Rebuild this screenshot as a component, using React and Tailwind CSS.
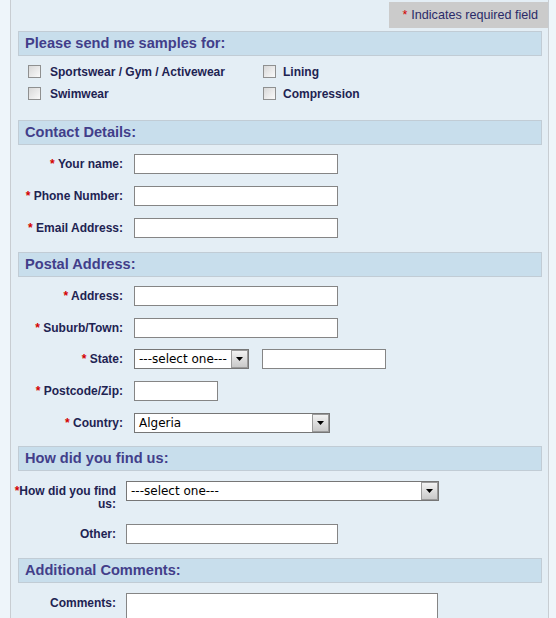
const Star = () => <span className="text-[#d40000]">*</span>;

const SectionHeader = ({ children }) => (
  <div className="h-[25px] border border-[#c1ccd5] bg-[#c8deec] pl-[6px] flex items-center text-[14.6px] font-bold text-[#423e8a]">
    {children}
  </div>
);

const Checkbox = ({ label, gap = "ml-[9px]" }) => (
  <div className="flex items-center h-[13px]">
    <span className="w-[13px] h-[13px] border border-[#8f9090] bg-gradient-to-br from-[#d8d8d8] to-[#fafafa]" />
    <span className={`${gap} text-[12px] font-bold text-[#1e2352]`}>{label}</span>
  </div>
);

const TextInput = ({ w }) => (
  <input type="text" className={`${w} h-[20px] border border-[#858585] bg-white outline-none`} />
);

const Select = ({ w, value }) => (
  <div className={`${w} h-[20px] border border-[#767676] bg-white flex items-stretch`}>
    <span className="flex-1 pl-[4px] text-[12px] leading-[18px] text-black font-['DejaVu_Sans',Verdana,sans-serif] whitespace-nowrap overflow-hidden">
      {value}
    </span>
    <span className="w-[17px] border border-[#9a9a9a] bg-gradient-to-b from-[#f2f2f2] to-[#c9c9c9] flex items-center justify-center">
      <svg width="7" height="4" viewBox="0 0 7 4">
        <path d="M0 0h7L3.5 4z" fill="#000" />
      </svg>
    </span>
  </div>
);

const Row = ({ label, required, labelW = "w-[105px]", gap = "ml-[11px]", className = "", children }) => (
  <div className={`flex items-center h-[20px] ${className}`}>
    <div className={`${labelW} shrink-0 text-right text-[12px] font-bold text-[#1e2352]`}>
      {required && (
        <>
          <Star />{" "}
        </>
      )}
      {label}
    </div>
    <div className={`${gap} flex items-center`}>{children}</div>
  </div>
);

export default function App() {
  return (
    <div className="min-h-screen bg-[#eef5fa] pl-[10px] pr-[7px] font-['Liberation_Sans',Arial,sans-serif]">
      <div className="min-h-[618px] border-x border-[#c8cdd2] bg-[#e4eef5] pl-[7px] pr-[6px] pb-10">
        {/* Required note */}
        <div className="flex justify-end pt-[2px] -mr-[6px]">
          <div className="h-[26px] bg-[#cbcbcb] pl-[13px] pr-[10px] flex items-center text-[12.6px] text-[#2a2a68]">
            <Star />
            <span className="ml-[4px]">Indicates required field</span>
          </div>
        </div>

        {/* Samples */}
        <div className="mt-[3px]">
          <SectionHeader>Please send me samples for:</SectionHeader>
          <div className="grid grid-cols-[235px_1fr] gap-y-[9px] pl-[10px] mt-[9px]">
            <Checkbox label="Sportswear / Gym / Activewear" />
            <Checkbox label="Lining" gap="ml-[7px]" />
            <Checkbox label="Swimwear" />
            <Checkbox label="Compression" gap="ml-[7px]" />
          </div>
        </div>

        {/* Contact */}
        <div className="mt-[20px]">
          <SectionHeader>Contact Details:</SectionHeader>
          <div className="flex flex-col gap-[12px] mt-[9px]">
            <Row label="Your name:" required>
              <TextInput w="w-[204px]" />
            </Row>
            <Row label="Phone Number:" required>
              <TextInput w="w-[204px]" />
            </Row>
            <Row label="Email Address:" required>
              <TextInput w="w-[204px]" />
            </Row>
          </div>
        </div>

        {/* Postal */}
        <div className="mt-[14px]">
          <SectionHeader>Postal Address:</SectionHeader>
          <div className="flex flex-col mt-[9px]">
            <Row label="Address:" required>
              <TextInput w="w-[204px]" />
            </Row>
            <Row label="Suburb/Town:" required className="mt-[12px]">
              <TextInput w="w-[204px]" />
            </Row>
            <Row label="State:" required className="mt-[11px]">
              <Select w="w-[115px]" value="---select one---" />
              <div className="ml-[13px] flex">
                <TextInput w="w-[124px]" />
              </div>
            </Row>
            <Row label="Postcode/Zip:" required className="mt-[12px]">
              <TextInput w="w-[84px]" />
            </Row>
            <Row label="Country:" required className="mt-[12px]">
              <Select w="w-[196px]" value="Algeria" />
            </Row>
          </div>
        </div>

        {/* How did you find us */}
        <div className="mt-[13px]">
          <SectionHeader>How did you find us:</SectionHeader>
          <div className="flex items-start mt-[10px]">
            <div className="w-[104px] -ml-[6px] shrink-0 pt-[4px] text-right text-[12px] leading-[13px] font-bold text-[#1e2352]">
              <Star />
              How did you find us:
            </div>
            <div className="ml-[10px]">
              <Select w="w-[313px]" value="---select one---" />
            </div>
          </div>
          <Row label="Other:" labelW="w-[98px]" gap="ml-[10px]" className="mt-[13px]">
            <TextInput w="w-[212px]" />
          </Row>
        </div>

        {/* Comments */}
        <div className="mt-[14px]">
          <SectionHeader>Additional Comments:</SectionHeader>
          <div className="flex items-start mt-[10px]">
            <div className="w-[98px] shrink-0 pt-[1px] text-right text-[12px] font-bold text-[#1e2352]">
              Comments:
            </div>
            <textarea className="ml-[10px] w-[312px] h-[100px] border border-[#858585] bg-white outline-none resize-none" />
          </div>
        </div>
      </div>
    </div>
  );
}
